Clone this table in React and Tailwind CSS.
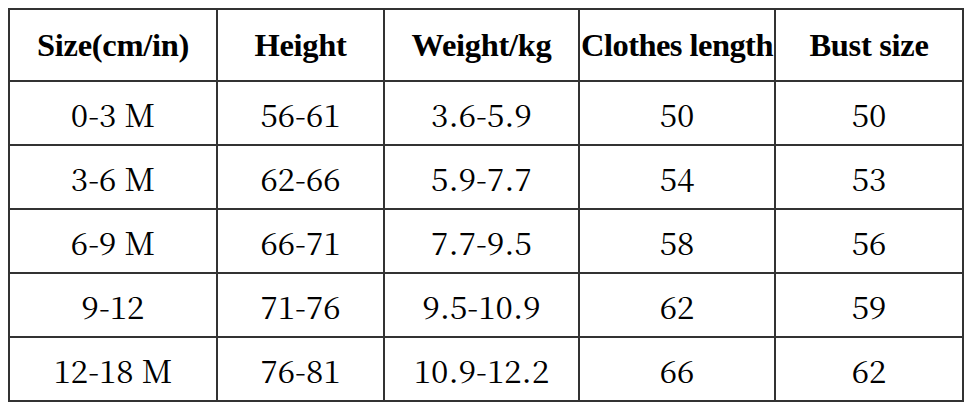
import React from "react";

const headers = ["Size(cm/in)", "Height", "Weight/kg", "Clothes length", "Bust size"];
const rows = [
  ["0-3 M", "56-61", "3.6-5.9", "50", "50"],
  ["3-6 M", "62-66", "5.9-7.7", "54", "53"],
  ["6-9 M", "66-71", "7.7-9.5", "58", "56"],
  ["9-12", "71-76", "9.5-10.9", "62", "59"],
  ["12-18 M", "76-81", "10.9-12.2", "66", "62"],
];

export default function App() {
  return (
    <div className="w-[969px] h-[412px] bg-white pt-[8px] pl-[8px]">
      <div className="grid grid-cols-[206px_165px_193px_194px_186px] grid-rows-[70px_62px_62px_62px_62px_62px] gap-[2px] p-[2px] bg-[#333] w-max">
        {headers.map((h) => (
          <div
            key={h}
            className={
              "bg-white flex items-center justify-center text-[32.5px] font-bold text-black whitespace-nowrap font-['Liberation_Serif','Times_New_Roman',serif] " +
              (h === "Clothes length" ? "tracking-[-0.55px]" : "tracking-[-0.3px]")
            }
          >
            {h}
          </div>
        ))}
        {rows.map((r, i) =>
          r.map((c, j) => (
            <div key={i + "-" + j} className="bg-white flex items-center justify-center pt-[2px] text-[31.5px] text-black whitespace-nowrap font-['Noto_Serif_CJK_SC','Liberation_Serif',serif]">
              {c}
            </div>
          ))
        )}
      </div>
    </div>
  );
}
